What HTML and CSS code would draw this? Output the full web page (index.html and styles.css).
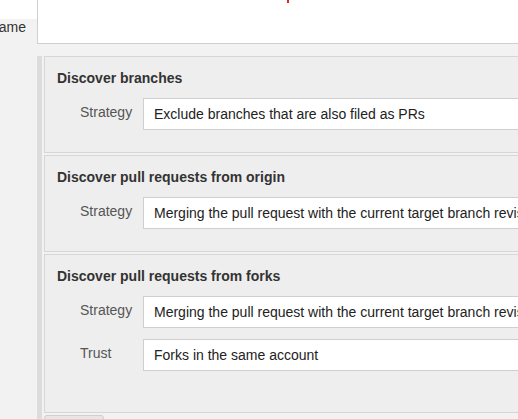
FILE: index.html
```html
<!DOCTYPE html>
<html>
<head>
<meta charset="utf-8">
<link rel="stylesheet" href="styles.css">
</head>
<body>
<div class="top">
  <div class="tab-left"><span class="tab-label">Name</span></div>
  <div class="top-main"><span class="req-dot"></span></div>
</div>
<div class="content">
  <div class="stack">
    <div class="section">
      <div class="section-title">Discover branches</div>
      <div class="row">
        <div class="label">Strategy</div>
        <div class="field">Exclude branches that are also filed as PRs</div>
      </div>
    </div>
    <div class="section">
      <div class="section-title">Discover pull requests from origin</div>
      <div class="row">
        <div class="label">Strategy</div>
        <div class="field">Merging the pull request with the current target branch revision</div>
      </div>
    </div>
    <div class="section section-last">
      <div class="section-title">Discover pull requests from forks</div>
      <div class="row">
        <div class="label">Strategy</div>
        <div class="field">Merging the pull request with the current target branch revision</div>
      </div>
      <div class="row">
        <div class="label">Trust</div>
        <div class="field">Forks in the same account</div>
      </div>
    </div>
    <div class="btn-row"><div class="btn"></div></div>
  </div>
</div>
</body>
</html>
```
FILE: styles.css
```css
html, body {
  margin: 0;
  padding: 0;
  height: 100%;
  overflow: hidden;
}
body {
  background: #f2f2f2;
  font-family: "Liberation Sans", Arial, sans-serif;
  font-size: 14px;
  color: #333;
}
.top {
  display: flex;
  height: 44px;
}
.tab-left {
  width: 37px;
  flex: none;
  background: linear-gradient(#ffffff 0, #ffffff 19px, #f2f2f2 19px);
  overflow: hidden;
  display: flex;
  justify-content: flex-end;
  padding-top: 19px;
  box-sizing: border-box;
}
.tab-label {
  line-height: 16px;
  color: #333;
  margin-right: 11px;
  white-space: nowrap;
}
.top-main {
  flex: 1;
  background: #fff;
  border-left: 1px solid #cfcfcf;
  border-bottom: 1px solid #cfcfcf;
  padding-left: 249px;
}
.req-dot {
  display: block;
  width: 2px;
  height: 3px;
  background: #e0242b;
}
.content {
  padding: 12px 0 0 37px;
}
.stack {
  border-left: 5px solid #dcdcdc;
  padding-left: 2px;
  display: flex;
  flex-direction: column;
  gap: 2px;
}
.section {
  background: #eeeeee;
  border: 1px solid #d6d6d6;
  border-right: none;
  padding: 13px 0 22px 12px;
}
.section-last {
  padding-bottom: 41px;
}
.section-title {
  font-weight: bold;
  line-height: 16px;
  color: #333;
  margin-bottom: 12px;
}
.row {
  display: flex;
  align-items: flex-start;
  margin-top: 11px;
}
.section-title + .row {
  margin-top: 0;
}
.label {
  width: 63px;
  flex: none;
  padding: 6px 0 0 23px;
  line-height: 16px;
  color: #555;
}
.field {
  flex: 1;
  height: 30px;
  background: #fff;
  border: 1px solid #cfcfcf;
  border-right: none;
  padding-left: 10px;
  line-height: 30px;
  white-space: nowrap;
  overflow: hidden;
  color: #222;
}
.btn-row {
  display: flex;
}
.btn {
  width: 58px;
  height: 24px;
  background: #e6e6e6;
  border: 1px solid #cfcfcf;
  border-radius: 3px 3px 0 0;
}
```
